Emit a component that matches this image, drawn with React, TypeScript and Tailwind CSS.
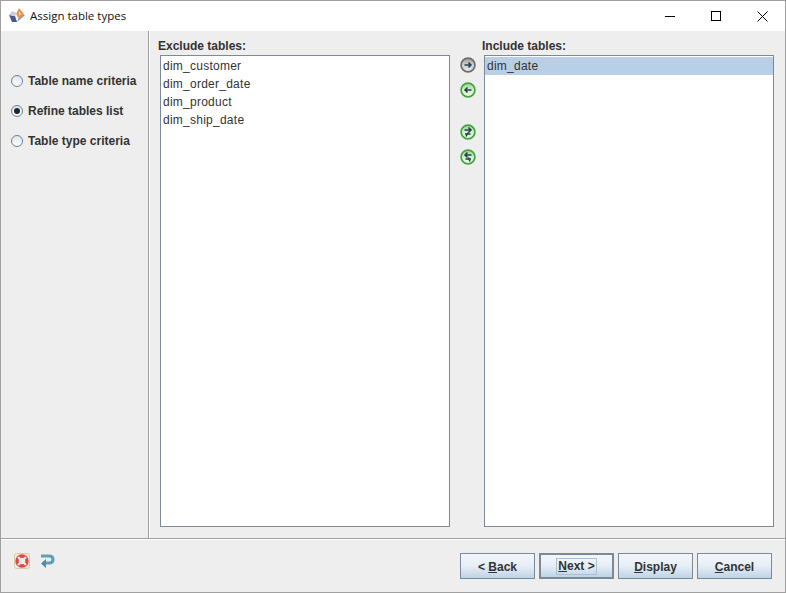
import React from "react";

const font = { fontFamily: '"Liberation Sans", Arial, sans-serif' };

const RoundArrow: React.FC<{ grey?: boolean; children: React.ReactNode }> = ({ grey, children }) => (
  <svg width="16" height="16" viewBox="0 0 16 16" className="block">
    <defs>
      <linearGradient id="greyFill" x1="0" y1="0" x2="0" y2="1">
        <stop offset="0" stopColor="#9c9c9c" />
        <stop offset="0.5" stopColor="#d0d0d0" />
        <stop offset="1" stopColor="#ececec" />
      </linearGradient>
      <linearGradient id="greenFill" x1="0" y1="0" x2="0" y2="1">
        <stop offset="0" stopColor="#97d688" />
        <stop offset="0.5" stopColor="#d3f0c8" />
        <stop offset="1" stopColor="#eafae5" />
      </linearGradient>
    </defs>
    <circle cx="8" cy="8" r="6.9" fill={grey ? "url(#greyFill)" : "url(#greenFill)"} stroke={grey ? "#6c6c6c" : "#45a340"} strokeWidth="1.7" />
    <g stroke="#1f4257" strokeWidth="1.5" fill="none">{children}</g>
  </svg>
);

const Radio: React.FC<{ label: string; checked?: boolean }> = ({ label, checked }) => (
  <div className="flex items-center h-[30px] pl-[10px] gap-[5px]">
    <span className="w-[12px] h-[12px] rounded-full border border-[#6d7f92] bg-gradient-to-b from-[#dde6ef] to-[#ffffff] flex items-center justify-center">
      {checked && <span className="w-[6px] h-[6px] rounded-full bg-[#1d2730]" />}
    </span>
    <span className="text-[12px] font-bold text-[#333333]">{label}</span>
  </div>
);

const WizardButton: React.FC<{ accel: string; before?: string; after: string; isDefault?: boolean }> = ({ accel, before, after, isDefault }) => (
  <button
    className={
      "w-[75px] h-[26px] flex items-center justify-center text-[12px] font-bold text-[#333333] bg-gradient-to-b from-[#f3f7fb] via-[#e6eef6] to-[#bfd3e6] border-[#7a8a99] " +
      (isDefault ? "border-[2px]" : "border")
    }
  >
    <span className={isDefault ? "px-[1px] leading-[15px] border border-[#a9c0d8]" : "pt-px"}>
      {before}
      <span className="underline">{accel}</span>
      {after}
    </span>
  </button>
);

const ListBox: React.FC<{ items: string[]; selected?: string }> = ({ items, selected }) => (
  <div className="h-[472px] border border-[#7a8a99] bg-white pt-px">
    {items.map((item) => (
      <div key={item} className={"h-[18px] leading-[18px] pl-[2px] text-[12px] tracking-[0.25px] text-[#333333] " + (item === selected ? "bg-[#b8cfe5]" : "")}>
        {item}
      </div>
    ))}
  </div>
);

const App: React.FC = () => {
  return (
    <div style={font} className="w-[786px] h-[593px] bg-[#eeeeee] border border-[#a0a0a0] flex flex-col overflow-hidden">
      {/* title bar */}
      <div className="h-[30px] bg-white flex items-center shrink-0">
        <svg width="16" height="15" viewBox="0 0 16 15" className="ml-[8px] mr-[5px] mb-[1px]">
          <path d="M0 7 L6 8 L8 14 L3 14 Z" fill="#46598a" />
          <path d="M8 14 L16 7 L13 6 L10 9 Z" fill="#8590ab" />
          <path d="M10 0 L15 6 L10 11 L7 6 Z" fill="#e6974c" />
          <path d="M10 3 L12 6 L10 8 Z" fill="#f5d9b8" />
          <path d="M3 3 L8 5 L6 8 L0 7 Z" fill="#c8d0de" />
        </svg>
        <span className="text-[11.5px] text-[#111111]" style={{ fontFamily: '"Open Sans", sans-serif' }}>Assign table types</span>
        <div className="ml-auto flex items-center">
          <div className="w-[46px] h-[30px] flex items-center justify-center">
            <div className="w-[10px] h-px bg-black" />
          </div>
          <div className="w-[46px] h-[30px] flex items-center justify-center">
            <div className="w-[10px] h-[10px] border border-black" />
          </div>
          <div className="w-[46px] h-[30px] flex items-center justify-center">
            <svg width="11" height="11" viewBox="0 0 11 11">
              <path d="M0.5 0.5 L10.5 10.5 M10.5 0.5 L0.5 10.5" stroke="#000" strokeWidth="1" />
            </svg>
          </div>
        </div>
      </div>

      {/* body */}
      <div className="h-[507px] flex shrink-0">
        <div className="w-[147px] pt-[35px] shrink-0">
          <Radio label="Table name criteria" />
          <Radio label="Refine tables list" checked />
          <Radio label="Table type criteria" />
        </div>
        <div className="w-[1px] bg-[#a0a0a0] shrink-0" />
        <div className="w-[1px] bg-white shrink-0" />

        <div className="flex flex-1 pl-[8px]">
          <div className="w-[292px]">
            <div className="h-[24px] pt-[8px] text-[12px] leading-[14px] font-bold text-[#333333]">Exclude tables:</div>
            <div className="ml-[2px] w-[290px]">
              <ListBox items={["dim_customer", "dim_order_date", "dim_product", "dim_ship_date"]} />
            </div>
          </div>
          <div className="w-[34px] pt-[26px] pl-[2px] flex flex-col items-center shrink-0">
            <RoundArrow grey>
              <path d="M4.5 8 H11 M8.5 5.5 L11 8 L8.5 10.5" />
            </RoundArrow>
            <div className="mt-[9px]">
              <RoundArrow>
                <path d="M5 8 H11.5 M7.5 5.5 L5 8 L7.5 10.5" />
              </RoundArrow>
            </div>
            <div className="mt-[26px]">
              <RoundArrow>
                <path d="M4.5 6 H11 M8.5 3.5 L11 6 L8.5 8.5 M5 10 H10.5 M8 8.5 L6 12.5" />
              </RoundArrow>
            </div>
            <div className="mt-[9px]">
              <RoundArrow>
                <path d="M5 6 H11.5 M7.5 3.5 L5 6 L7.5 8.5 M5.5 10 H11 M8.5 8.5 L10 12.5" />
              </RoundArrow>
            </div>
          </div>
          <div className="w-[292px] -ml-[2px]">
            <div className="h-[24px] pt-[8px] text-[12px] leading-[14px] font-bold text-[#333333]">Include tables:</div>
            <div className="ml-[2px] w-[290px]">
              <ListBox items={["dim_date"]} selected="dim_date" />
            </div>
          </div>
        </div>
      </div>

      <div className="h-px bg-[#a0a0a0] shrink-0" />
      <div className="h-px bg-white shrink-0" />

      {/* footer */}
      <div className="flex-1 flex items-start">
        <div className="flex items-center gap-[10px] pl-[13px] pt-[13px]">
          <svg width="16" height="16" viewBox="0 0 16 16">
            <rect x="0.5" y="0.5" width="15" height="15" rx="2" fill="#f4ead8" stroke="#dcc9a0" />
            <circle cx="8" cy="8" r="5" fill="none" stroke="#e0444c" strokeWidth="3.4" />
            <path d="M4 4 L6 6 M12 4 L10 6 M4 12 L6 10 M12 12 L10 10" stroke="#e6e6e6" strokeWidth="2.4" />
          </svg>
          <svg width="15" height="16" viewBox="0 0 15 16">
            <path d="M1 3 H9 Q13 3 13 6.5 Q13 10 9 10 H5" fill="none" stroke="#5b9fb8" strokeWidth="3" />
            <path d="M6 6 L1 10.5 L6 15 Z" fill="#4d8ca6" />
          </svg>
        </div>
        <div className="ml-auto flex gap-[4px] pt-[13px] pr-[13px]">
          <WizardButton before="< " accel="B" after="ack" />
          <WizardButton accel="N" after="ext >" isDefault />
          <WizardButton accel="D" after="isplay" />
          <WizardButton accel="C" after="ancel" />
        </div>
      </div>
    </div>
  );
};

export default App;
